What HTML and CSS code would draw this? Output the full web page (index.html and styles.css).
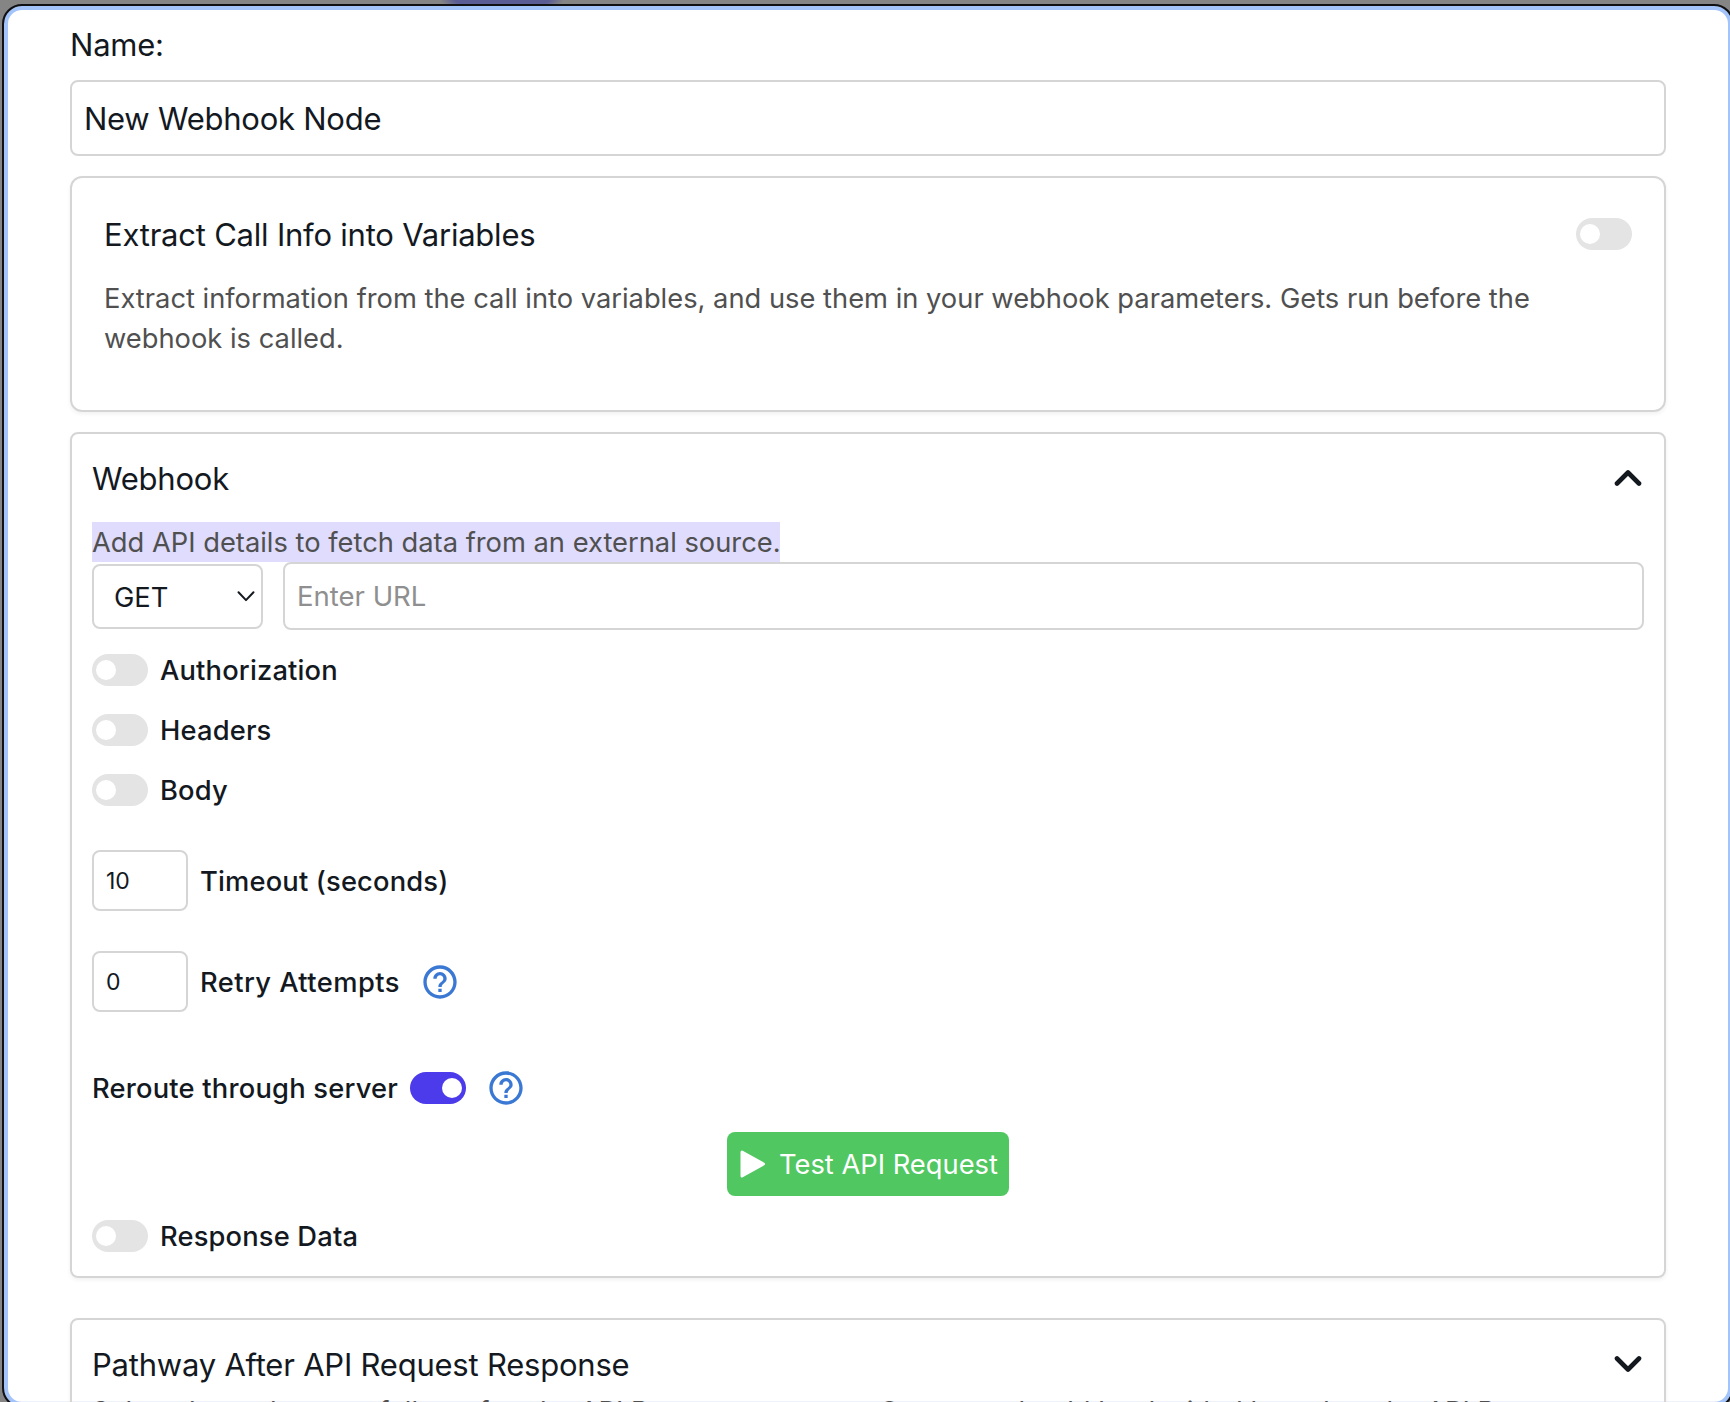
FILE: index.html
```html
<!DOCTYPE html>
<html lang="en">
<head>
<meta charset="utf-8">
<title>Webhook Node</title>
<link rel="stylesheet" href="styles.css">
</head>
<body>
<main class="modal">
  <h2 class="title name-label">Name:</h2>
  <div class="field name-field">New Webhook Node</div>

  <section class="card extract">
    <div class="extract-head">
      <h2 class="title">Extract Call Info into Variables</h2>
      <span class="toggle"></span>
    </div>
    <p class="desc">Extract information from the call into variables, and use them in your webhook parameters. Gets run before the<br>webhook is called.</p>
  </section>

  <section class="card webhook">
    <div class="card-head">
      <h2 class="title">Webhook</h2>
      <svg class="chevron" viewBox="0 0 28 18" width="28" height="18"><path d="M3 14.5 14 3.500 25 14.5"/></svg>
    </div>
    <p class="desc"><mark class="selected">Add API details to fetch data from an external source.</mark></p>
    <div class="request">
      <div class="field method"><span>GET</span><svg viewBox="0 0 18 12" width="18" height="12"><path d="M1.5 2.3 9 10.1 16.5 2.3"/></svg></div>
      <div class="field url">Enter URL</div>
    </div>
    <div class="row auth"><span class="toggle"></span><span class="label">Authorization</span></div>
    <div class="row headers"><span class="toggle"></span><span class="label">Headers</span></div>
    <div class="row"><span class="toggle"></span><span class="label">Body</span></div>
    <div class="row number-row timeout"><div class="field number">10</div><span class="label">Timeout (seconds)</span></div>
    <div class="row number-row retry"><div class="field number">0</div><span class="label label-retry">Retry Attempts</span>
      <svg class="help" viewBox="0 0 24 24"><path d="M11 18h2v-2h-2v2zm1-16C6.480 2 2 6.480 2 12s4.480 10 10 10 10-4.480 10-10S17.520 2 12 2zm0 18c-4.410 0-8-3.590-8-8s3.590-8 8-8 8 3.590 8 8-3.590 8-8 8zm0-14c-2.210 0-4 1.790-4 4h2c0-1.100.9-2 2-2s2 .9 2 2c0 2-3 1.750-3 5h2c0-2.250 3-2.500 3-5 0-2.210-1.790-4-4-4z"/></svg>
    </div>
    <div class="row reroute"><span class="label label-reroute">Reroute through server</span><span class="toggle on"></span>
      <svg class="help" viewBox="0 0 24 24"><path d="M11 18h2v-2h-2v2zm1-16C6.480 2 2 6.480 2 12s4.480 10 10 10 10-4.480 10-10S17.520 2 12 2zm0 18c-4.410 0-8-3.590-8-8s3.590-8 8-8 8 3.590 8 8-3.590 8-8 8zm0-14c-2.210 0-4 1.790-4 4h2c0-1.100.9-2 2-2s2 .9 2 2c0 2-3 1.750-3 5h2c0-2.250 3-2.500 3-5 0-2.210-1.790-4-4-4z"/></svg>
    </div>
    <button class="test"><svg viewBox="0 0 26 28" width="26" height="28"><path d="M3 2 24.500 14 3 26Z"/></svg><span>Test API Request</span></button>
    <div class="row response"><span class="toggle"></span><span class="label">Response Data</span></div>
  </section>

  <section class="card pathway">
    <div class="card-head">
      <h2 class="title">Pathway After API Request Response</h2>
      <svg class="chevron" viewBox="0 0 28 18" width="28" height="18"><path d="M3 3.500 14 14.500 25 3.500"/></svg>
    </div>
    <p class="desc">Select the pathway to follow after the API Request response. Outcome should be decided based on the API R</p>
  </section>
</main>
</body>
</html>
```
FILE: styles.css
```css
* { box-sizing: border-box; }
html, body { margin: 0; height: 1402px; overflow: hidden; }
body {
  padding: 6px 0 0 4px;
  background: #858585 radial-gradient(ellipse 62px 12px at 502px 0, #5b5c94 75%, transparent 100%) no-repeat;
  font-family: Inter, "Liberation Sans", sans-serif;
  color: #13191f;
}
.modal {
  width: 1728px;
  height: 1400px;
  padding: 11px 62px 0;
  border: 4px solid #a3c4fb;
  outline: 2px solid #111114;
  border-radius: 18px;
  background: linear-gradient(#eef2fb, #eef2fb) bottom / 100% 1px no-repeat, #fff;
  background-origin: padding-box;
  overflow: hidden;
}
h2, p { margin: 0; }
.title { padding-top: 2px; font-size: 31px; line-height: 48px; font-weight: 400; letter-spacing: -.22px; white-space: nowrap; }
.name-label { height: 59px; padding-top: 0; }
.field { display: flex; align-items: center; border: 2px solid #d5d5d5; border-radius: 8px; background: #fff; }
.name-field { width: 1596px; height: 76px; padding: 1px 12px 0; font-size: 31px; letter-spacing: -.25px; white-space: nowrap; }
.card { width: 1596px; border: 2px solid #d5d5d5; border-radius: 8px; box-shadow: 0 2px 4px rgba(0,0,0,.06); }
.extract { height: 236px; margin-top: 20px; padding: 32px; border-radius: 12px; }
.extract-head { display: flex; justify-content: space-between; align-items: center; height: 48px; margin-bottom: 21px; }
.desc { font-size: 27.3px; line-height: 40px; color: #505050; white-space: nowrap; }
.webhook { height: 846px; margin-top: 20px; padding: 20px; display: flex; flex-direction: column; }
.card-head { display: flex; justify-content: space-between; align-items: center; height: 48px; padding-right: 2px; }
.chevron { fill: none; stroke: #13191f; stroke-width: 4.6; stroke-linecap: round; stroke-linejoin: round; }
.webhook .card-head { margin-bottom: 20px; }
.webhook .desc { height: 40px; }
.selected { display: block; width: 688px; height: 40px; padding-top: 1px; background: #dfdcfd; color: #505050; }
.request { display: flex; align-items: center; gap: 20px; height: 68px; }
.method { width: 171px; height: 65px; padding: 0 6px 0 20px; justify-content: space-between; font-size: 27.3px; }
.method span { padding-top: 2px; }
.method svg { fill: none; stroke: #13191f; stroke-width: 2; stroke-linecap: round; stroke-linejoin: round; }
.url { flex: 1; height: 68px; padding: 0 12px; font-size: 27.5px; color: #8f8f8f; }
.row { display: flex; align-items: center; gap: 12px; height: 32px; flex: none; }
.auth { margin-top: 24px; }
.headers { margin: 28px 0; }
.label { padding-top: 2px; font-size: 27.3px; line-height: 40px; font-weight: 500; letter-spacing: .17px; white-space: nowrap; }
.label-retry { letter-spacing: .43px; }
.label-reroute { letter-spacing: .21px; }
.toggle { display: flex; align-items: center; width: 56px; height: 32px; padding: 0 4px; border-radius: 16px; background: #e4e4e4; flex: none; }
.toggle::after { content: ""; width: 20px; height: 20px; border-radius: 50%; background: #fff; }
.toggle.on { background: #4c3beb; justify-content: flex-end; }
.number-row { height: 61px; }
.number { width: 96px; height: 61px; padding: 0 12px; font-size: 23px; }
.timeout { margin-top: 44px; }
.retry { margin-top: 40px; }
.help { width: 40px; height: 40px; fill: #3a78d4; margin-left: 8px; flex: none; }
.reroute { margin-top: 60px; }
.test { display: flex; align-items: center; gap: 14px; align-self: center; width: 282px; height: 64px; margin-top: 28px; padding: 0 12px; border: 0; border-radius: 8px; background: #50c761; color: #fff; font: 400 27.3px Inter, "Liberation Sans", sans-serif; white-space: nowrap; flex: none; }
.test svg { fill: #fff; stroke: #fff; stroke-width: 3; stroke-linejoin: round; flex: none; }
.response { margin-top: 24px; }
.pathway { height: 160px; margin-top: 40px; padding: 20px; }
.pathway .card-head { margin-bottom: 4px; }
```
